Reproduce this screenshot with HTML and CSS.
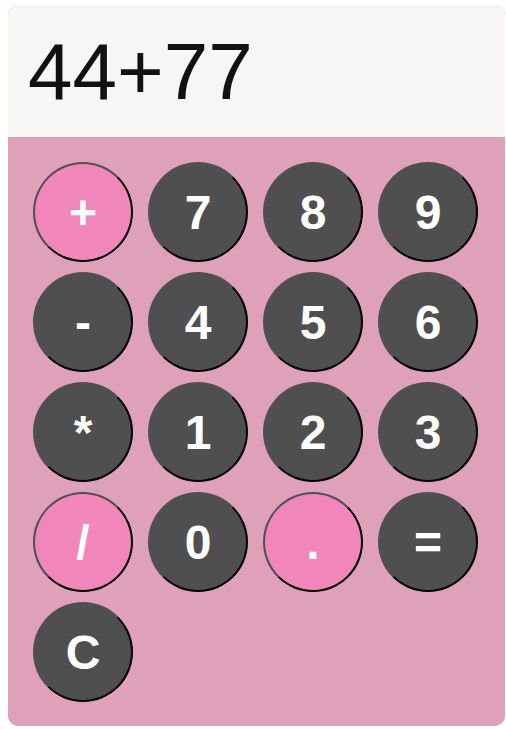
FILE: index.html
```html
<!DOCTYPE html>
<html>
<head>
<meta charset="utf-8">
<link rel="stylesheet" href="styles.css">
</head>
<body>
<div class="calc">
  <div class="display">44+77</div>
  <div class="keys">
    <button class="key op">+</button>
    <button class="key">7</button>
    <button class="key">8</button>
    <button class="key">9</button>
    <button class="key">-</button>
    <button class="key">4</button>
    <button class="key">5</button>
    <button class="key">6</button>
    <button class="key">*</button>
    <button class="key">1</button>
    <button class="key">2</button>
    <button class="key">3</button>
    <button class="key op">/</button>
    <button class="key">0</button>
    <button class="key op">.</button>
    <button class="key">=</button>
    <button class="key">C</button>
  </div>
</div>
</body>
</html>
```
FILE: styles.css
```css
html, body {
  margin: 0;
  background: #ffffff;
}
body {
  padding: 5px 0 0 8px;
  font-family: "Liberation Sans", Arial, sans-serif;
}
.calc {
  width: 497px;
  border-radius: 10px;
  overflow: hidden;
  background: #dfa0b9;
}
.display {
  height: 132px;
  box-sizing: border-box;
  background: #f7f6f5;
  color: #111111;
  font-size: 80px;
  line-height: 1;
  padding: 27px 20px 0;
}
.keys {
  display: grid;
  grid-template-columns: repeat(4, 100px);
  grid-auto-rows: 100px;
  column-gap: 15px;
  row-gap: 10px;
  padding: 25px 25px 24px;
}
.key {
  width: 100px;
  height: 100px;
  box-sizing: border-box;
  border-radius: 50%;
  border: 2px solid;
  border-color: #505050 #000000 #000000 #505050;
  background: #4f4f4f;
  color: #ffffff;
  font-family: "Liberation Sans", Arial, sans-serif;
  font-weight: bold;
  font-size: 48px;
  padding: 0;
  display: flex;
  align-items: center;
  justify-content: center;
}
.key.op {
  background: #f086ba;
}
```
